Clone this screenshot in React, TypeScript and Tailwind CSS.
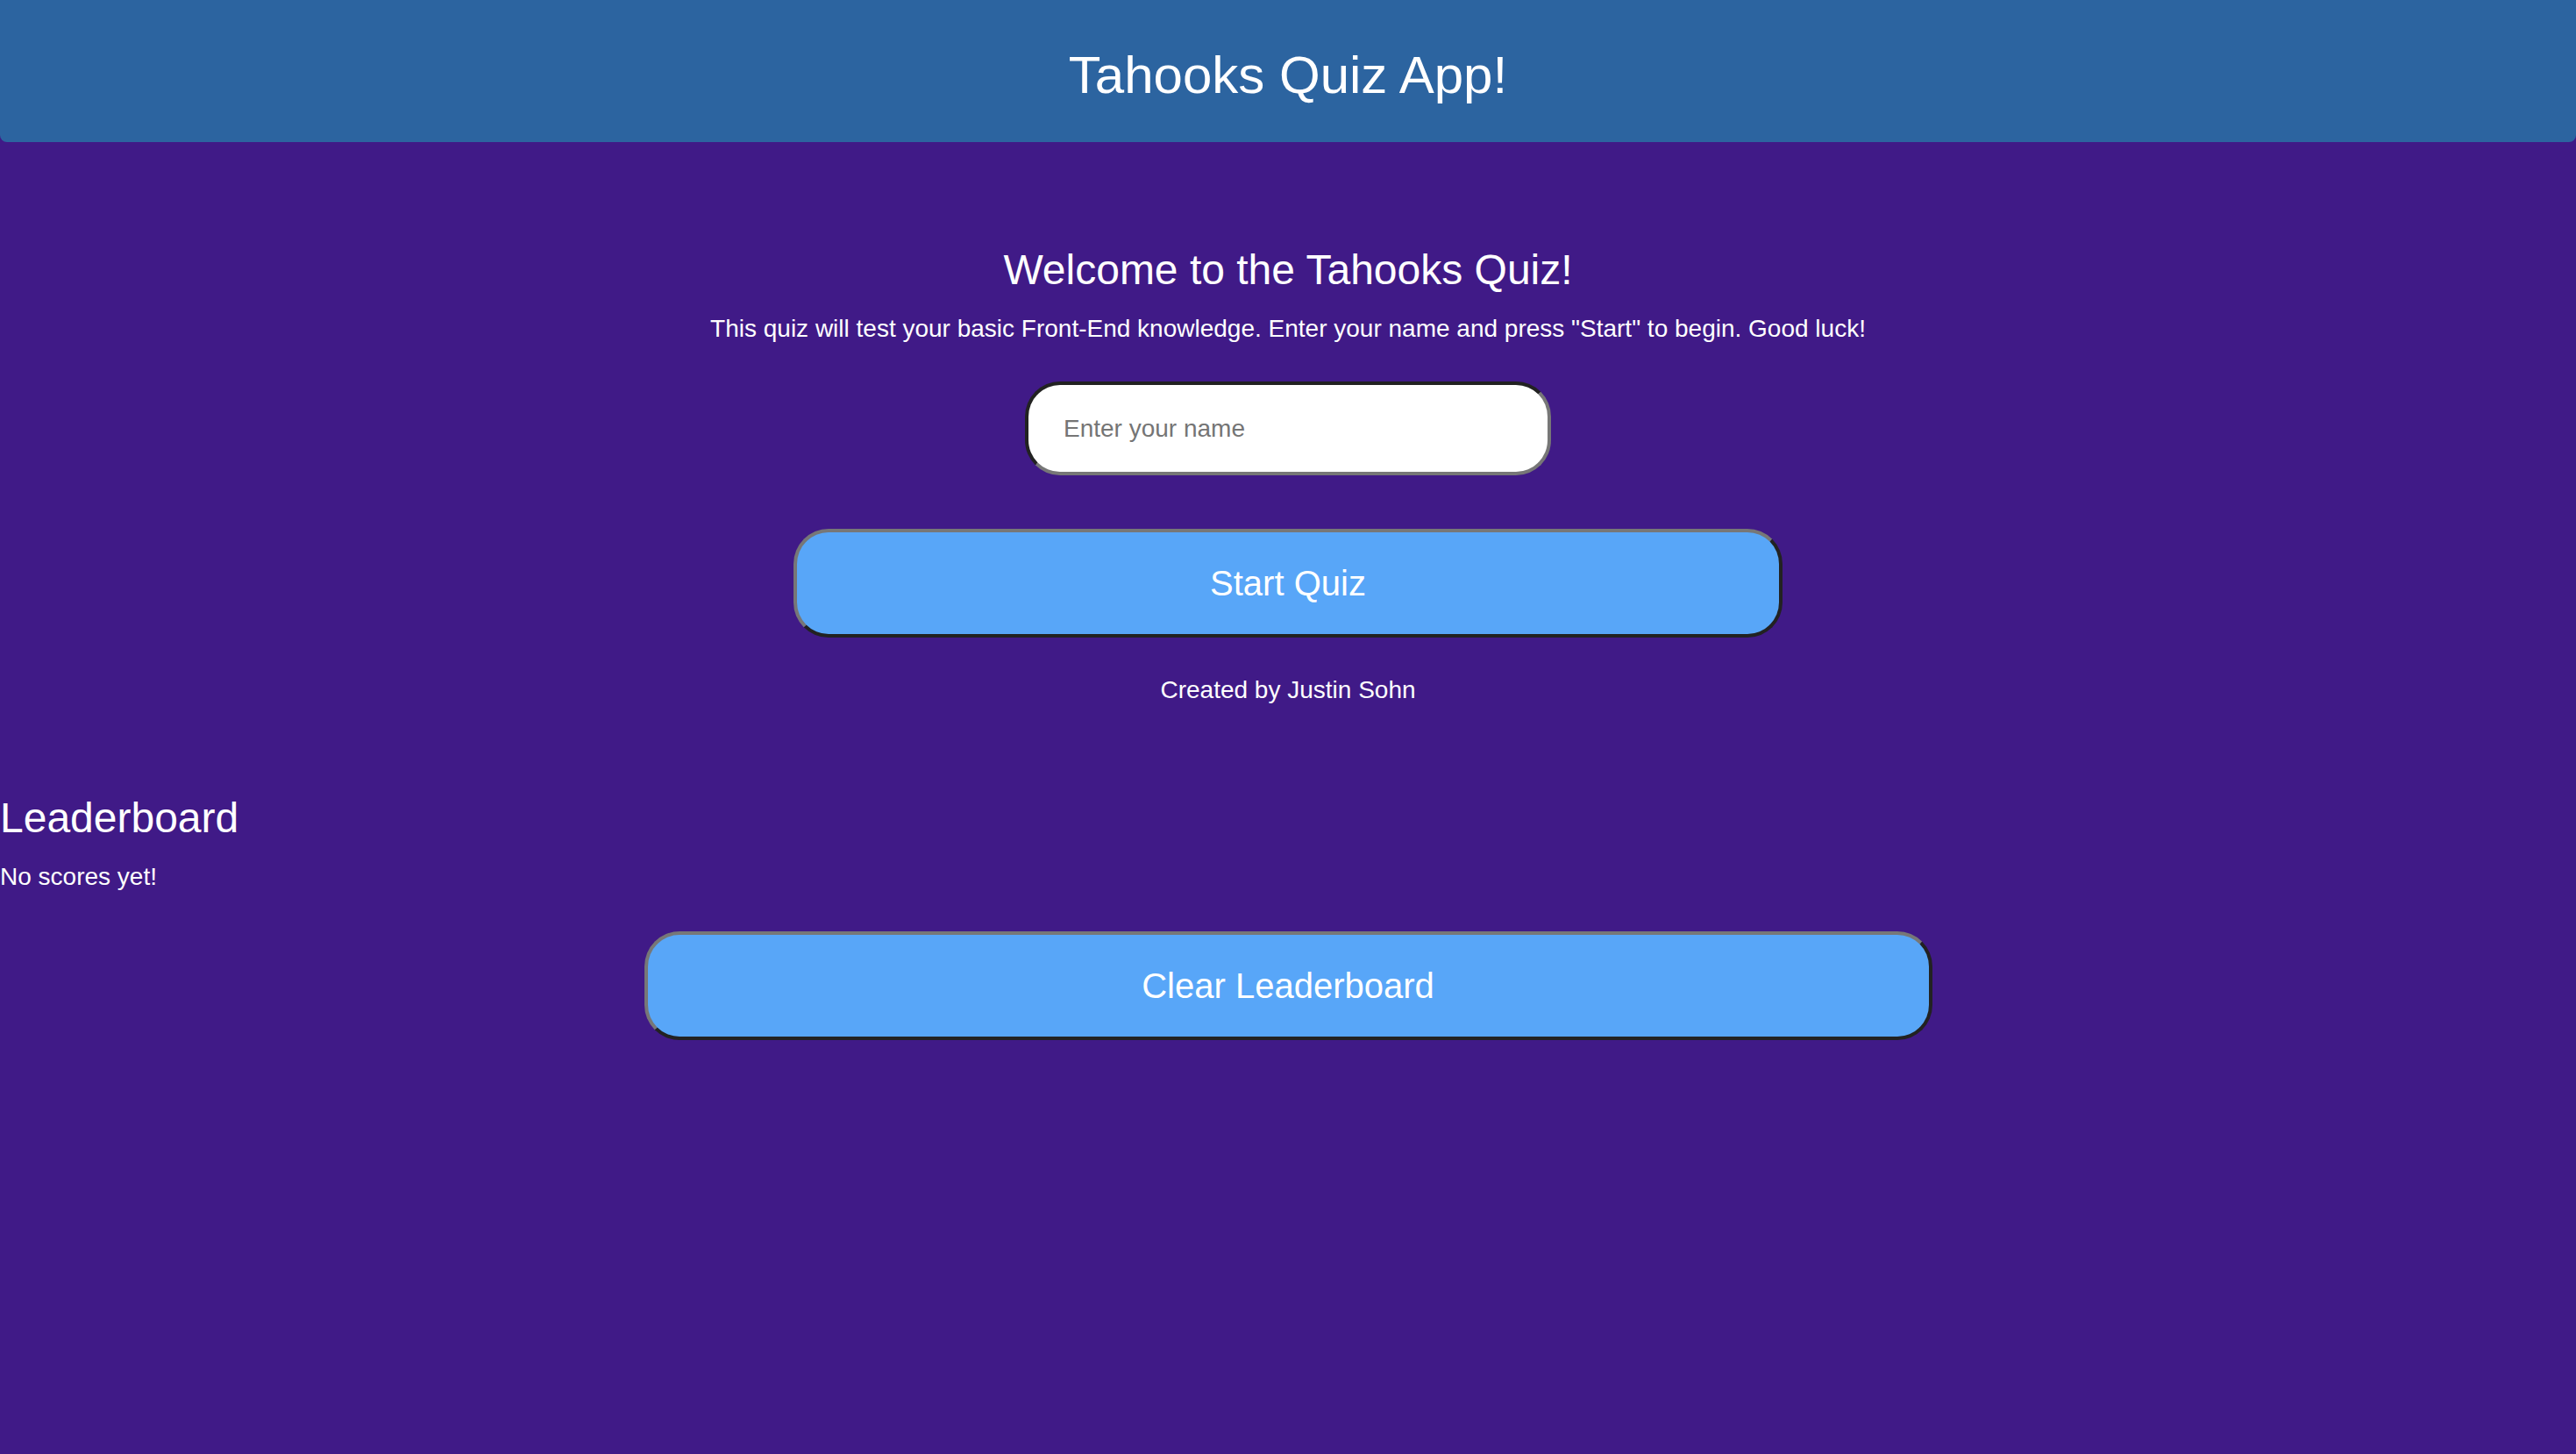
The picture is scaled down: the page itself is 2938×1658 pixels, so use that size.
const font = { fontFamily: '"Liberation Sans", Arial, sans-serif' };

function PillButton({ label, width }: { label: string; width: string }) {
  return (
    <button
      className={`${width} h-[124px] rounded-[40px] border-4 border-t-[#777777] border-l-[#777777] border-b-[#222222] border-r-[#222222] bg-[#58a6f8] text-[40px] text-white`}
    >
      {label}
    </button>
  );
}

export default function App() {
  return (
    <div className="min-h-screen bg-[#401a87] text-white" style={font}>
      <header className="flex h-[162px] items-center justify-center rounded-b-[8px] bg-[#2c64a0] pt-[10px]">
        <h1 className="text-[60px] leading-none">Tahooks Quiz App!</h1>
      </header>

      <section className="flex flex-col items-center">
        <h2 className="mt-[118px] text-[48px] leading-[55px]">Welcome to the Tahooks Quiz!</h2>
        <p className="mt-[24px] text-[28px] leading-[32px]">
          This quiz will test your basic Front-End knowledge. Enter your name and press "Start" to begin. Good luck!
        </p>
        <input
          type="text"
          placeholder="Enter your name"
          className="mt-[44px] h-[107px] w-[600px] rounded-[40px] border-4 border-t-[#222222] border-l-[#222222] border-b-[#777777] border-r-[#777777] bg-white px-[40px] text-[28px] text-black placeholder:text-[#757575] outline-none"
        />
        <div className="mt-[61px]">
          <PillButton label="Start Quiz" width="w-[1128px]" />
        </div>
        <p className="mt-[44px] text-[28px] leading-[32px]">Created by Justin Sohn</p>
      </section>

      <section className="mt-[102px]">
        <h2 className="text-[48px] leading-[55px]">Leaderboard</h2>
        <p className="mt-[24px] text-[28px] leading-[32px]">No scores yet!</p>
        <div className="mt-[46px] flex justify-center">
          <PillButton label="Clear Leaderboard" width="w-[1469px]" />
        </div>
      </section>
    </div>
  );
}
